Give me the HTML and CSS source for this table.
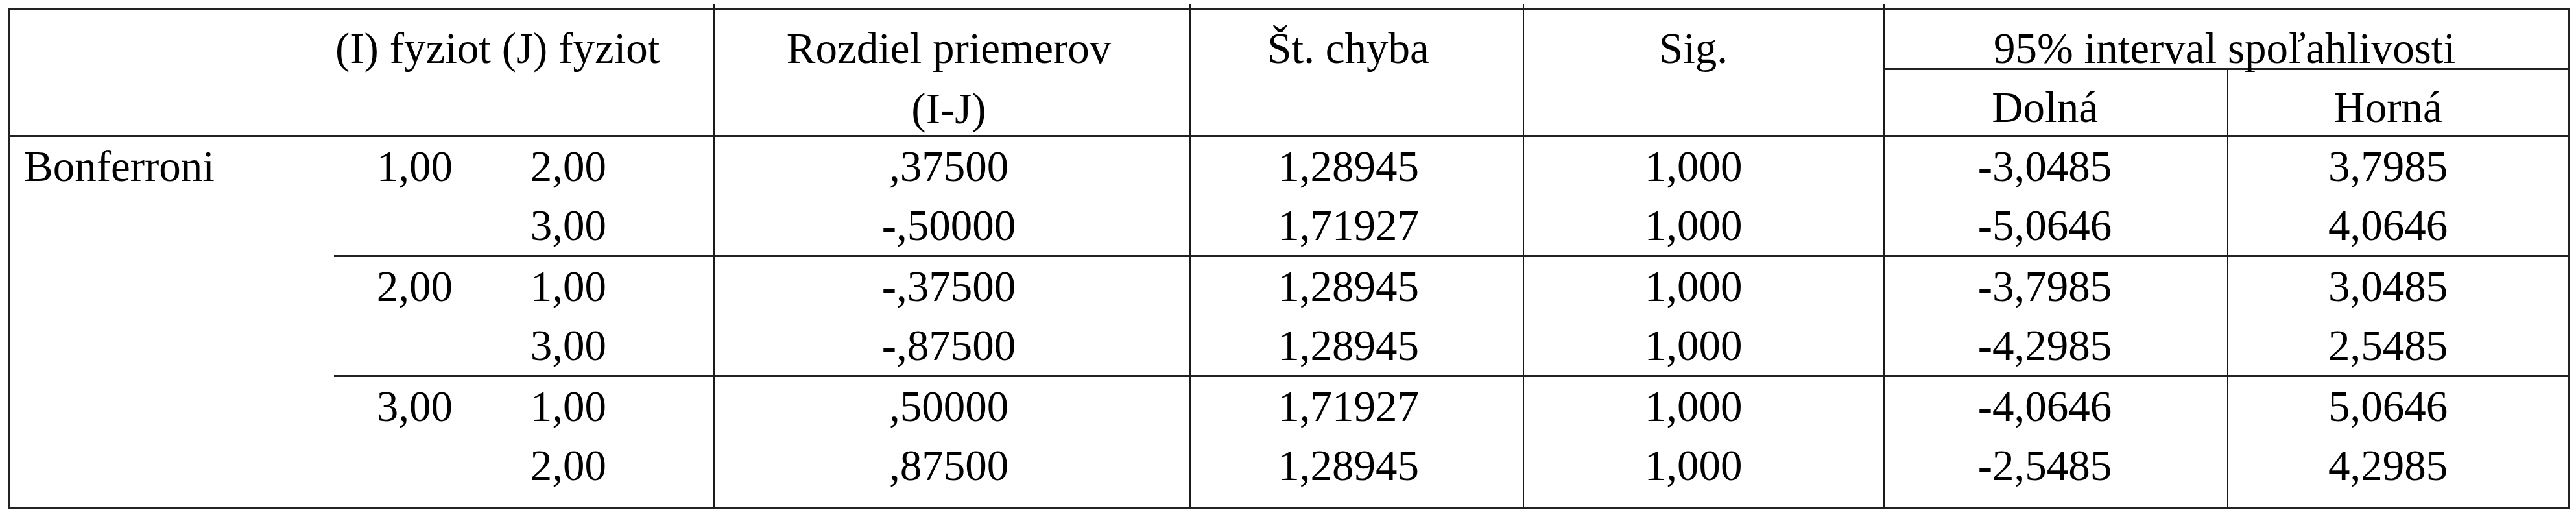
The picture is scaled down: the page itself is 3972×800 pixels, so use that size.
FILE: index.html
```html
<!DOCTYPE html>
<html lang="sk">
<head>
<meta charset="utf-8">
<title>Bonferroni</title>
<link rel="stylesheet" href="styles.css">
</head>
<body>
<div class="tbl">
  <div class="cell head rs2 hb"></div>
  <div class="cell head rs2 cs2 hb ij">(I) fyziot (J) fyziot</div>
  <div class="cell head rs2 hb vl tick ctr p3">Rozdiel priemerov<br>(I-J)</div>
  <div class="cell head rs2 hb vl tick ctr p4">Št. chyba</div>
  <div class="cell head rs2 hb vl tick ctr p5">Sig.</div>
  <div class="cell head cs2 sb vl tick ctr pci">95% interval spoľahlivosti</div>
  <div class="cell head sub hb vl ctr p6">Dolná</div>
  <div class="cell head sub hb vl ctr p7">Horná</div>

  <div class="cell body rs3 label">Bonferroni</div>

  <div class="cell body hb ri c1">1,00</div>
  <div class="cell body hb ri c2">2,00<br>3,00</div>
  <div class="cell body hb vl ctr p3">,37500<br>-,50000</div>
  <div class="cell body hb vl ctr p4">1,28945<br>1,71927</div>
  <div class="cell body hb vl ctr p5">1,000<br>1,000</div>
  <div class="cell body hb vl ctr p6">-3,0485<br>-5,0646</div>
  <div class="cell body hb vl ctr p7">3,7985<br>4,0646</div>

  <div class="cell body hb ri c1">2,00</div>
  <div class="cell body hb ri c2">1,00<br>3,00</div>
  <div class="cell body hb vl ctr p3">-,37500<br>-,87500</div>
  <div class="cell body hb vl ctr p4">1,28945<br>1,28945</div>
  <div class="cell body hb vl ctr p5">1,000<br>1,000</div>
  <div class="cell body hb vl ctr p6">-3,7985<br>-4,2985</div>
  <div class="cell body hb vl ctr p7">3,0485<br>2,5485</div>

  <div class="cell body ri c1">3,00</div>
  <div class="cell body ri c2">1,00<br>2,00</div>
  <div class="cell body vl ctr p3">,50000<br>,87500</div>
  <div class="cell body vl ctr p4">1,71927<br>1,28945</div>
  <div class="cell body vl ctr p5">1,000<br>1,000</div>
  <div class="cell body vl ctr p6">-4,0646<br>-2,5485</div>
  <div class="cell body vl ctr p7">5,0646<br>4,2985</div>
</div>
</body>
</html>
```

FILE: styles.css
```css
* {
  box-sizing: border-box;
}

html, body {
  margin: 0;
  padding: 0;
  background: #ffffff;
}

body {
  font-family: "Liberation Serif", "Times New Roman", serif;
  font-size: 67px;
  color: #000000;
}

.tbl {
  display: grid;
  width: max-content;
  margin: 13px 0 0 13px;
  grid-template-columns: 500px 245px 340px 734px 514px 556px 530px 526px;
  grid-template-rows: 92px 103px 185px 185px 200px;
  border-top: 3px solid #222222;
  border-bottom: 3px solid #222222;
  border-left: 2px solid #222222;
  border-right: 2px solid #222222;
}

.cell {
  white-space: nowrap;
  min-width: 0;
}

.head {
  line-height: 93px;
  padding-top: 12px;
}

.head.sub {
  padding-top: 11px;
}

.body {
  line-height: 91px;
}

.rs2 { grid-row: span 2; }
.rs3 { grid-row: span 3; }
.cs2 { grid-column: span 2; }

.hb { border-bottom: 3px solid #222222; }
.sb { border-bottom: 3px solid #222222; }
.vl { border-left: 2px solid #1a1a1a; }

.tick {
  position: relative;
}

.tick::before {
  content: "";
  position: absolute;
  left: -2px;
  top: -10px;
  width: 2px;
  height: 7px;
  background: #1a1a1a;
}

.ctr { text-align: center; }
.ri { text-align: right; }

.ij { padding-left: 2px; }

.label { padding-left: 22px; }

.c1 { padding-right: 62px; }
.c2 { padding-right: 165px; }

.p3 { padding-right: 10px; }
.p4 { padding-right: 26px; }
.p5 { padding-right: 32px; }
.p6 { padding-right: 34px; }
.p7 { padding-right: 32px; }
.pci { padding-right: 6px; }
```
